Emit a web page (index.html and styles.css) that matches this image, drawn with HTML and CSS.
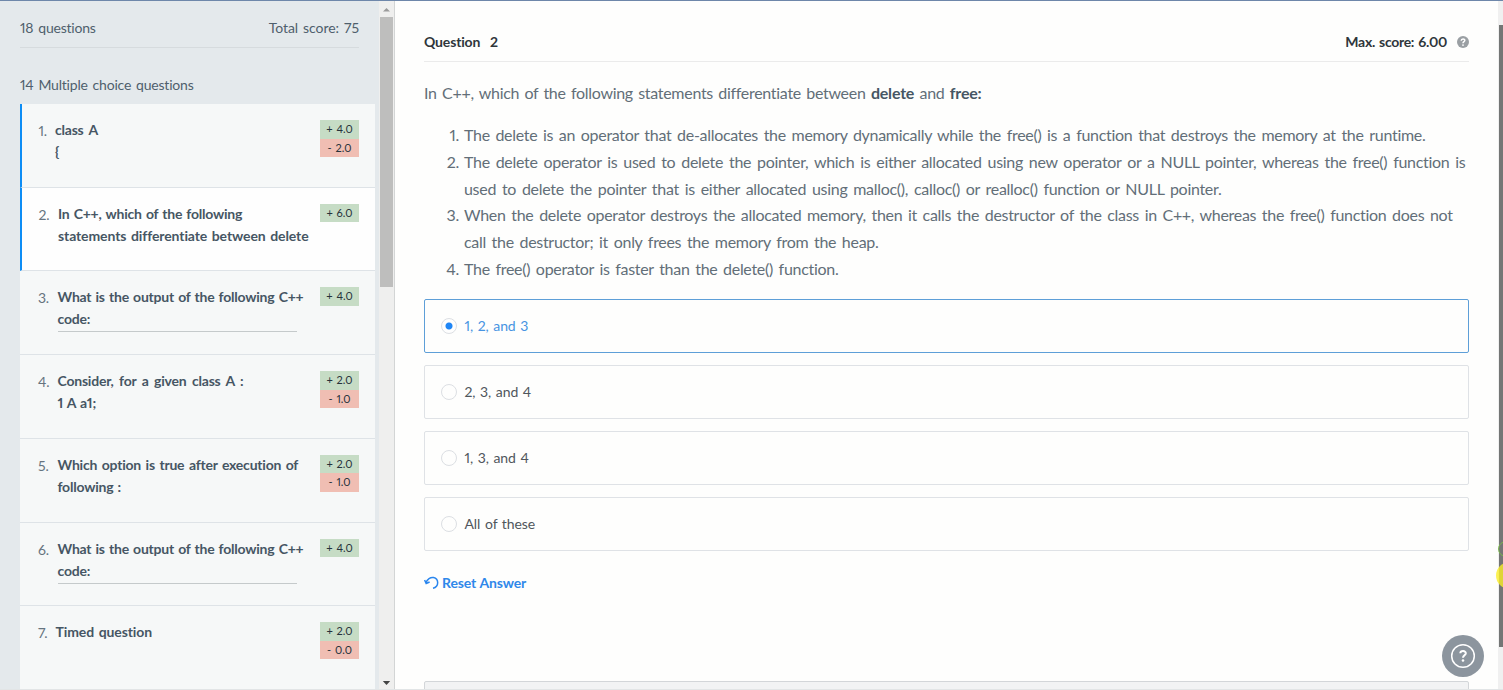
FILE: index.html
```html
<!DOCTYPE html>
<html lang="en">
<head>
<meta charset="utf-8">
<title>Question 2</title>
<link rel="stylesheet" href="styles.css">
</head>
<body>
<div class="app">
  <aside class="sidebar">
    <div class="panel">
      <header class="summary"><span>18 questions</span><span class="total">Total score: 75</span></header>
      <h2 class="section">14 Multiple choice questions</h2>
      <ol class="list">
        <li class="item answered"><span class="num">1.</span><div class="label n1"><p class="wide">class A</p><p>{</p></div><div class="scores"><b class="plus">+ 4.0</b><b class="minus">- 2.0</b></div></li>
        <li class="item answered current"><span class="num">2.</span><div class="label"><p>In C++, which of the following</p><p class="roomy">statements differentiate between delete</p></div><div class="scores"><b class="plus">+ 6.0</b></div></li>
        <li class="item"><span class="num">3.</span><div class="label"><p>What is the output of the following C++</p><p>code:</p><hr class="rule"></div><div class="scores"><b class="plus">+ 4.0</b></div></li>
        <li class="item"><span class="num">4.</span><div class="label"><p class="wide">Consider, for a given class A :</p><p>1 A a1;</p></div><div class="scores"><b class="plus">+ 2.0</b><b class="minus">- 1.0</b></div></li>
        <li class="item"><span class="num">5.</span><div class="label"><p class="airy">Which option is true after execution of</p><p>following :</p></div><div class="scores"><b class="plus">+ 2.0</b><b class="minus">- 1.0</b></div></li>
        <li class="item"><span class="num">6.</span><div class="label"><p>What is the output of the following C++</p><p>code:</p><hr class="rule"></div><div class="scores"><b class="plus">+ 4.0</b></div></li>
        <li class="item"><span class="num">7.</span><div class="label n7"><p class="roomy">Timed question</p></div><div class="scores"><b class="plus">+ 2.0</b><b class="minus">- 0.0</b></div></li>
      </ol>
    </div>
    <div class="track">
      <svg class="arrow" width="15" height="15" viewBox="0 0 15 15"><path d="M4 9.5 7.5 6 11 9.5z" fill="#9b9b9b"/></svg>
      <div class="thumb"></div>
      <svg class="arrow end" width="15" height="15" viewBox="0 0 15 15"><path d="M3.8 6 11.2 6 7.5 10z" fill="#444"/></svg>
    </div>
  </aside>
  <main class="main">
    <div class="content">
      <header class="qhead"><span class="qtitle">Question &nbsp;2</span>
        <span class="max"><span>Max. score: 6.00</span>
        <svg width="12" height="12" viewBox="0 0 12 12"><circle cx="6" cy="6" r="6" fill="#9a9fa3"/><path d="M4.2 4.7C4.3 2.3 7.9 2.4 7.8 4.5 7.7 5.7 6 5.7 6 7.2" fill="none" stroke="#fff" stroke-width="1.5"/><circle cx="6" cy="9.1" r=".9" fill="#fff"/></svg></span>
      </header>
      <div class="body">
        <p class="intro">In C++, which of the following statements differentiate between <strong>delete</strong> and <strong>free:</strong></p>
        <ol class="points">
          <li><i>1.</i><div><p>The delete is an operator that de-allocates the memory dynamically while the free() is a function that destroys the memory at the runtime.</p></div></li>
          <li><i>2.</i><div><p class="looser">The delete operator is used to delete the pointer, which is either allocated using new operator or a NULL pointer, whereas the free() function is</p><p class="loose">used to delete the pointer that is either allocated using malloc(), calloc() or realloc() function or NULL pointer.</p></div></li>
          <li><i>3.</i><div><p>When the delete operator destroys the allocated memory, then it calls the destructor of the class in C++, whereas the free() function does not</p><p>call the destructor; it only frees the memory from the heap.</p></div></li>
          <li><i>4.</i><div><p>The free() operator is faster than the delete() function.</p></div></li>
        </ol>
      </div>
      <div class="options">
        <label class="option selected"><span class="radio"></span><span>1, 2, and 3</span></label>
        <label class="option"><span class="radio"></span><span>2, 3, and 4</span></label>
        <label class="option"><span class="radio"></span><span>1, 3, and 4</span></label>
        <label class="option"><span class="radio"></span><span>All of these</span></label>
      </div>
      <a class="reset"><svg width="15" height="14" viewBox="0 0 15 14"><path d="M2 6.8C3 3 6.6 1 9.5 1.5 15 2.7 15.300 11 9 12.300M.6 4 2.200 7.500 5.600 6" fill="none" stroke="#2a86ee" stroke-width="1.5"/></svg><span>Reset Answer</span></a>
      <div class="nextbox"></div>
    </div>
    <div class="pagetrack"><div class="pagethumb"></div></div>
  </main>
  <div class="topline"></div><div class="bottomline"></div>
  <button class="help" aria-label="Help"><svg width="26" height="26" viewBox="0 0 26 26" fill="none" stroke="#fff"><circle cx="13" cy="13" r="11.300" stroke-width="1.500"/><path d="M10.300 10.300C10.500 7.300 16 7.400 15.800 10.400 15.600 12.300 13 12.400 13 14.800" stroke-width="2"/><circle cx="13" cy="17.500" r="1.300" fill="#fff" stroke="none"/></svg></button>
  <div class="ring"></div><div class="cursor"></div>
</div>
</body>
</html>
```
FILE: styles.css
```css
* { box-sizing: border-box; }
body { margin: 0; overflow: hidden; font-family: Lato, "Noto Sans", sans-serif; font-size: 14px; color: #4f5f6d; background: #fefefd; font-variant-numeric: proportional-nums; }
p, h2, ol, hr { margin: 0; padding: 0; }
p { white-space: nowrap; }
ol { list-style: none; }
.app { position: relative; display: flex; width: 1503px; height: 690px; overflow: hidden; }
.sidebar { display: flex; width: 395px; flex: none; background: #e4e9ec; border-right: 2px solid #d3d5d5; }
.panel { width: 379px; flex: none; padding-left: 20px; letter-spacing: -.2px; word-spacing: 1.5px; }
.summary { display: flex; justify-content: space-between; width: 339px; height: 48px; padding-top: 18px; line-height: 20px; border-bottom: 1px solid #d6dbde; }
.total { letter-spacing: -.05px; }
.section { font-size: 14px; font-weight: 400; line-height: 20px; padding-top: 27px; height: 56px; }
.list { width: 355px; }
.item { display: flex; height: 83.72px; padding: 15px 16px 0 18px; background: #f6f8f8; border-bottom: 1px solid #dee3e7; }
.item.answered { border-left: 2px solid #0d8df5; padding-left: 16.5px; }
.item.current { background: #fefefe; }
.num { width: 19.5px; line-height: 24px; flex: none; color: #66747f; }
.label { flex: 1; font-weight: 700; line-height: 22px; color: #465664; letter-spacing: -.22px; word-spacing: 1px; }
.label .wide { word-spacing: 2.3px; }
.label .roomy { letter-spacing: -.1px; word-spacing: 1.3px; }
.label .airy { word-spacing: 1.4px; }
.n1 { margin-left: -3px; }
.n7 { margin-left: -2px; }
.rule { width: 239px; border: 0; border-top: 1px solid #c5cacb; margin-top: 1px; }
.scores { display: flex; flex-direction: column; width: 39px; padding-top: 1px; letter-spacing: 0; word-spacing: 1px; }
.scores b { height: 18.5px; text-align: center; font-weight: 400; font-size: 11px; line-height: 17px; color: #26323b; }
.plus { background: #c6dcc5; }
.minus { background: #f0beb3; }
.track { display: flex; flex-direction: column; flex: none; width: 15px; padding-top: 2px; background: #efefee; }
.thumb { width: 13px; height: 270px; margin-left: 1px; background: #bebebd; }
.arrow { display: block; }
.end { margin-top: auto; }
.main { display: flex; flex: 1; justify-content: space-between; padding-left: 29px; }
.content { width: 1046px; padding-right: 1px; }
.qhead { display: flex; justify-content: space-between; height: 62px; padding-top: 32px; line-height: 20px; font-weight: 700; color: #2f363b; border-bottom: 1px solid #ebebeb; letter-spacing: -.3px; word-spacing: 1px; }
.qtitle { letter-spacing: -.15px; word-spacing: 1.6px; }
.max { display: flex; align-items: center; gap: 10px; height: 20px; }
.body { font-size: 16px; line-height: 26.8px; color: #626e78; letter-spacing: -.3px; word-spacing: 1.87px; }
.intro { padding-top: 18px; word-spacing: 1.55px; }
.intro strong { color: #465664; letter-spacing: -.2px; }
.points { padding-top: 15.3px; }
.points li { display: flex; }
.points i { width: 35px; margin-right: 5px; text-align: right; font-style: normal; }
.loose { word-spacing: 2.05px; }
.looser { word-spacing: 2.08px; }
.options { display: grid; gap: 12px; padding-top: 15.7px; }
.option { display: flex; align-items: center; height: 54px; padding-left: 16px; gap: 7.5px; border: 1px solid #dfe2e6; border-radius: 2px; color: #50565c; letter-spacing: -.1px; word-spacing: 1.2px; }
.radio { width: 16px; height: 16px; border: 1px solid #dcdfe3; border-radius: 50%; }
.selected { border-color: #5e9fd8; color: #4794e2; }
.selected .radio { background: radial-gradient(circle, #1f86f5 3px, #fefefe 4px); }
.reset { display: flex; align-items: center; gap: 3px; height: 20px; margin-top: 22px; font-weight: 700; color: #2f88ea; letter-spacing: -.15px; word-spacing: .6px; }
.nextbox { height: 20px; margin-top: 88px; background: #f2f3f4; border: 1px solid #d3d6d9; border-radius: 2px; }
.pagetrack { width: 5px; padding: 25px 0 0 1px; background: #f0f0f0; }
.pagethumb { width: 4px; height: 622px; background: #747675; }
.topline { position: absolute; left: 0; top: 0; width: 100%; height: 1px; background: #6e87aa; }
.bottomline { position: absolute; left: 0; bottom: 0; width: 100%; height: 1px; background: #e2e5e6; }
.help { position: absolute; left: 1442px; top: 635px; width: 42px; height: 42px; padding: 0; display: grid; place-items: center; border: 0; border-radius: 50%; background: #8c959e; }
.ring { position: absolute; left: 1498px; top: 541px; width: 16px; height: 16px; border: 1px solid #79b64b; border-radius: 50%; }
.cursor { position: absolute; left: 1496px; top: 562px; width: 27px; height: 27px; border-radius: 50%; background: rgba(250, 238, 40, .8); }
```
